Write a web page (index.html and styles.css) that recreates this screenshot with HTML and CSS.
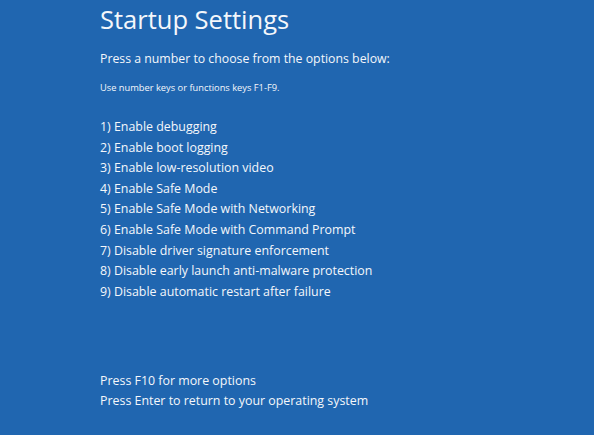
FILE: index.html
```html
<!DOCTYPE html>
<html>
<head>
<meta charset="utf-8">
<link rel="stylesheet" href="styles.css">
</head>
<body>
<div class="screen">
  <h1 class="title">Startup Settings</h1>
  <p class="lead">Press a number to choose from the options below:</p>
  <p class="hint">Use number keys or functions keys F1-F9.</p>
  <ul class="options">
    <li>1) Enable debugging</li>
    <li>2) Enable boot logging</li>
    <li>3) Enable low-resolution video</li>
    <li>4) Enable Safe Mode</li>
    <li>5) Enable Safe Mode with Networking</li>
    <li>6) Enable Safe Mode with Command Prompt</li>
    <li>7) Disable driver signature enforcement</li>
    <li>8) Disable early launch anti-malware protection</li>
    <li>9) Disable automatic restart after failure</li>
  </ul>
  <div class="footer">
    <p>Press F10 for more options</p>
    <p>Press Enter to return to your operating system</p>
  </div>
</div>
</body>
</html>
```

FILE: styles.css
```css
html, body {
  margin: 0;
  padding: 0;
  background: #2066b0;
}
.screen {
  width: 594px;
  height: 435px;
  box-sizing: border-box;
  padding-left: 100px;
  display: flex;
  flex-direction: column;
  color: #f4f7fb;
  font-family: "Open Sans", "Noto Sans", sans-serif;
  overflow: hidden;
}
.title {
  margin: 0;
  font-weight: 400;
  font-size: 25.5px;
  line-height: 38px;
}
.lead {
  margin: 2px 0 0;
  font-size: 12.3px;
  line-height: 38px;
}
.hint {
  margin: 0;
  font-size: 9.3px;
  line-height: 20px;
}
.options {
  list-style: none;
  margin: 19px 0 0;
  padding: 0;
  font-size: 12.4px;
  line-height: 20.6px;
}
.footer {
  margin-top: auto;
  margin-bottom: 23px;
  font-size: 12.4px;
  line-height: 20.6px;
}
.footer p {
  margin: 0;
}
```
